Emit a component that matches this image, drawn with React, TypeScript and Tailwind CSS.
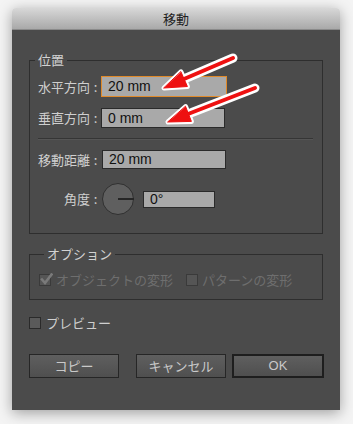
import React from "react";

const font = { fontFamily: '"Noto Sans CJK JP", "Noto Sans", sans-serif' };
const inputFont = { fontFamily: '"Liberation Sans", Arial, sans-serif' };

function Label({ text }: { text: string }) {
  return (
    <div className="flex w-[63px] shrink-0 justify-end text-[13px] leading-[16px] text-[#cfcfcf]">
      <span>{text}</span>
      <span className="w-[11px] text-center">:</span>
    </div>
  );
}

function Field({ value, w, h, focus }: { value: string; w: string; h: string; focus?: boolean }) {
  return (
    <div
      className={`${w} ${h} flex items-center bg-[#a9a9a9] pl-[6px] text-[14px] text-[#111] ${
        focus ? "border border-[#e08a2a]" : "border border-[#2a2a2a]"
      }`}
      style={inputFont}
    >
      {value}
    </div>
  );
}

function Check({ checked, disabled }: { checked?: boolean; disabled?: boolean }) {
  return (
    <div
      className={`relative h-[12px] w-[12px] shrink-0 border ${
        disabled ? "border-[#3a3a3a] bg-[#555]" : "border-[#2a2a2a] bg-[#5a5a5a]"
      }`}
    >
      {checked && (
        <svg className="absolute left-[0px] top-[-2px]" width="13" height="13" viewBox="0 0 13 13">
          <path d="M2 6.5 L5 10 L11.5 1.5" fill="none" stroke="#7a7a7a" strokeWidth="2.6" strokeLinecap="square" />
        </svg>
      )}
    </div>
  );
}

function Btn({ text, primary, w }: { text: string; primary?: boolean; w: string }) {
  return (
    <div
      className={`${w} flex h-[24px] items-center justify-center bg-gradient-to-b from-[#5f5f5f] to-[#4f4f4f] text-[13px] text-[#c9c9c9] ${
        primary ? "border-2 border-[#1e1e1e]" : "border border-[#262626]"
      }`}
      style={primary ? inputFont : undefined}
    >
      {text}
    </div>
  );
}

export default function App() {
  return (
    <div className="relative h-[424px] w-[353px] overflow-hidden bg-[#f4f4f4]" style={font}>
      <div className="pl-[12px] pt-[8px]">
        <div className="flex h-[402px] w-[328px] flex-col overflow-hidden rounded-t-[4px] shadow-[0_3px_14px_rgba(0,0,0,0.35)]">
          <div className="flex h-[22px] shrink-0 items-center justify-center border-b border-[#8a8a8a] bg-gradient-to-b from-[#d8d8d8] to-[#a9a9a9] text-[13px] text-[#222]">
            移動
          </div>
          <div className="flex flex-1 flex-col bg-[#4b4b4b] px-[17px]">
            <fieldset className="mt-[22px] border border-[#2e2e2e] pb-[18px] pl-[8px] pr-[9px]">
              <legend className="ml-[-3px] px-[3px] text-[13px] leading-[16px] text-[#d2d2d2]">位置</legend>
              <div className="mt-[8px] flex items-center">
                <Label text="水平方向" />
                <Field value="20 mm" w="w-[126px]" h="h-[21px]" focus />
              </div>
              <div className="mt-[11px] flex items-center">
                <Label text="垂直方向" />
                <Field value="0 mm" w="w-[124px]" h="h-[20px]" />
              </div>
              <div className="mt-[10px] h-[2px] border-t border-[#353535] border-b-[#555] border-b" />
              <div className="mt-[10px] flex items-center">
                <Label text="移動距離" />
                <div className="ml-[1px]">
                  <Field value="20 mm" w="w-[124px]" h="h-[19px]" />
                </div>
              </div>
              <div className="mt-[14px] flex items-center">
                <Label text="角度" />
                <div className="relative ml-[1px] h-[32px] w-[32px] rounded-full border border-[#303030] bg-[#5f5f5f]">
                  <div className="absolute left-[15px] top-[14px] h-[2px] w-[16px] bg-[#262626]" />
                </div>
                <div className="ml-[9px]">
                  <Field value="0°" w="w-[72px]" h="h-[17px]" />
                </div>
              </div>
            </fieldset>
            <fieldset className="mt-[12px] border border-[#2e2e2e] pb-[12px] pl-[9px] pr-[9px]">
              <legend className="ml-[5px] px-[3px] text-[13px] leading-[16px] text-[#d2d2d2]">オプション</legend>
              <div className="mt-[11px] flex h-[14px] items-center text-[13px] leading-[14px] text-[#6e6e6e]">
                <Check checked disabled />
                <span className="ml-[5px]">オブジェクトの変形</span>
                <div className="ml-[13px]">
                  <Check disabled />
                </div>
                <span className="ml-[4px]">パターンの変形</span>
              </div>
            </fieldset>
            <div className="mt-[16px] flex h-[14px] items-center text-[13px] leading-[14px] text-[#cfcfcf]">
              <Check />
              <span className="ml-[5px]">プレビュー</span>
            </div>
            <div className="mr-[-1px] mt-[24px] flex items-center">
              <Btn text="コピー" w="w-[90px]" />
              <div className="flex-1" />
              <Btn text="キャンセル" w="w-[90px]" />
              <div className="ml-[6px]">
                <Btn text="OK" primary w="w-[92px]" />
              </div>
            </div>
          </div>
        </div>
      </div>
      <svg className="pointer-events-none absolute left-0 top-0" width="353" height="424" viewBox="0 0 353 424">
        <g stroke="#ffffff" strokeLinejoin="round" strokeLinecap="round">
          <line x1="233" y1="58" x2="184" y2="79" strokeWidth="9" />
          <polygon points="164,88 187.4,86.5 181,71.9" fill="#ffffff" strokeWidth="5" />
          <line x1="255" y1="88" x2="188" y2="114" strokeWidth="9" />
          <polygon points="168,122 191.4,121.4 185.6,106.6" fill="#ffffff" strokeWidth="5" />
        </g>
        <g stroke="#ee1111" strokeLinejoin="round" strokeLinecap="round">
          <line x1="233" y1="58" x2="184" y2="79" strokeWidth="4" />
          <polygon points="164,88 187.4,86.5 181,71.9" fill="#ee1111" strokeWidth="1" />
          <line x1="255" y1="88" x2="188" y2="114" strokeWidth="4" />
          <polygon points="168,122 191.4,121.4 185.6,106.6" fill="#ee1111" strokeWidth="1" />
        </g>
      </svg>
    </div>
  );
}
